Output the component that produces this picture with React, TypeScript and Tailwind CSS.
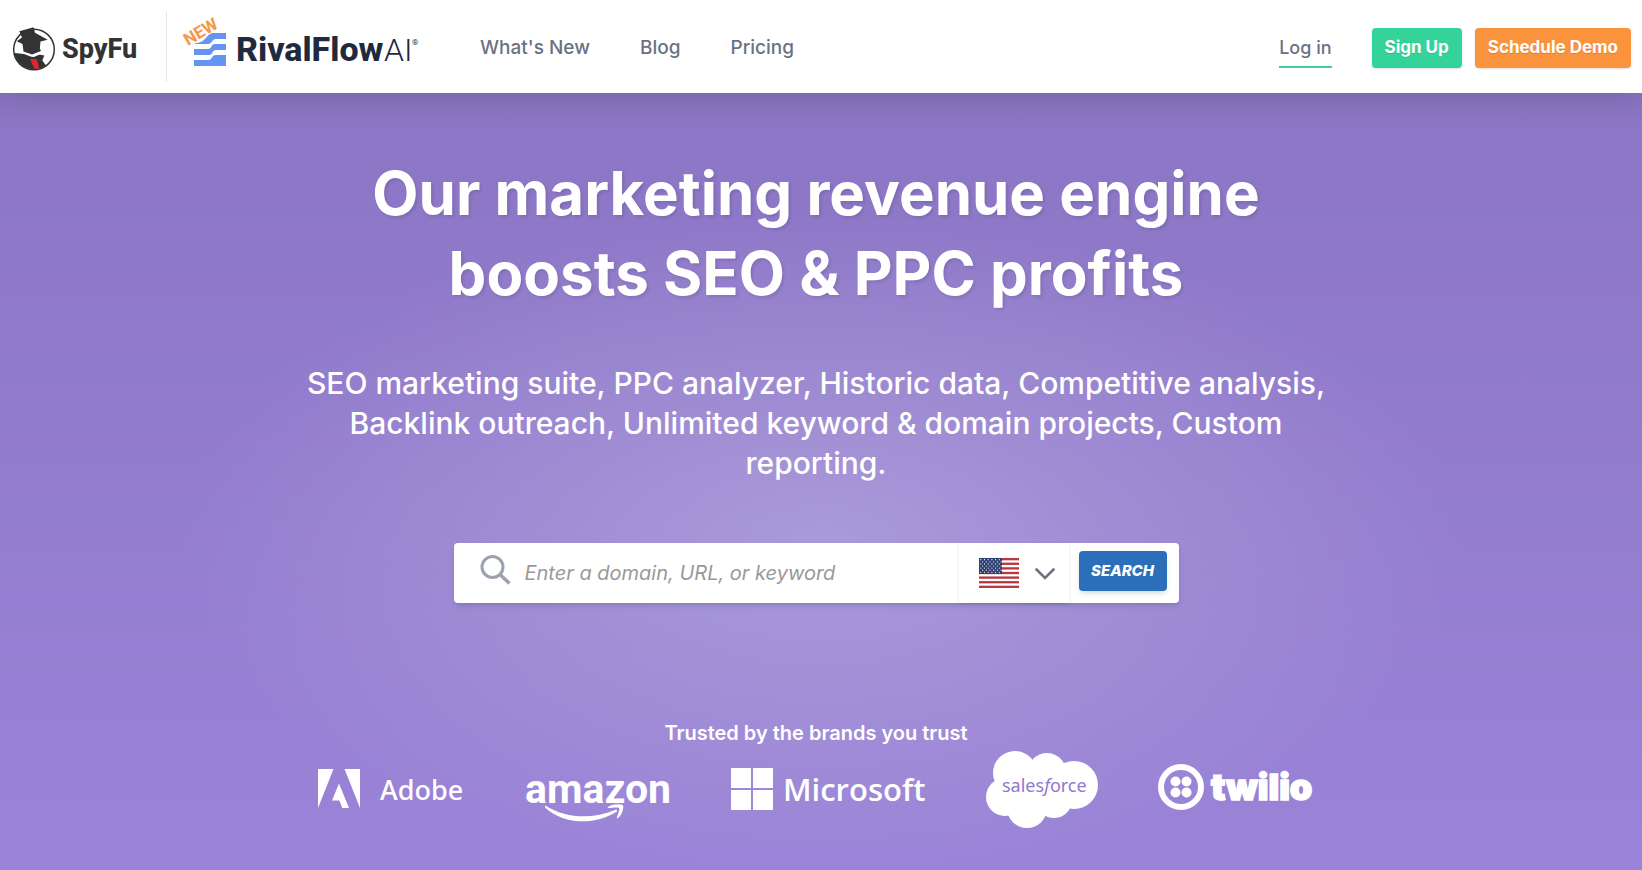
import { ReactNode } from "react";

const navLinks = ["What's New", "Blog", "Pricing"];

function SpyFuLogo() {
  return (
    <svg width="130" height="48" viewBox="0 0 130 48" role="img" aria-label="SpyFu">
      <circle cx="22" cy="24.500" r="20.300" fill="#fff" stroke="#333" strokeWidth="1.500" />
      <path
        d="M7.300 6.200 21.500 2.200 23 7.800 35.700 14.800 28.500 16.500 27.800 23.500 29 26 20 29.500 11.500 26.500 10.500 19 4.700 16.200 10 12.500Z"
        fill="#333"
      />
      <path
        d="M3 28 12 29 20 32 27 29.500 32.300 30.500 30.300 35.500 34 40.500A20.500 20.500 0 0 1 3 31Z"
        fill="#333"
      />
      <path d="M20 31.500 29 26.500 27.500 29.500 22 32Z" fill="#fff" />
      <path d="M18 33.800 24.700 34.200 27.300 43.800 22.300 43.800Z" fill="#e5222f" />
      <text x="50" y="33" fontFamily="Roboto, sans-serif" fontWeight="800" fontSize="27" fill="#333">
        SpyFu
      </text>
    </svg>
  );
}

function RivalFlowLogo() {
  return (
    <svg width="246" height="60" viewBox="-4 -4 246 60" role="img" aria-label="RivalFlow AI">
      <g fill="#6495f2">
        <path d="M13 28C23 28 23 18 31 18H43V24H33C29 24 29 29 25 29H11Z" />
        <path d="M11 34H25C29 34 28 29 32 29H43V35H33C29 35 30 40 26 40H11Z" />
        <path d="M11 45H25C30 45 28 40 33 40H43V51H11Z" />
      </g>
      <text
        x="5"
        y="31"
        transform="rotate(-31 5 31)"
        fontFamily="Roboto, sans-serif"
        fontWeight="700"
        fontSize="17"
        fill="#f5964a"
      >
        NEW
      </text>
      <text x="53" y="46" fontFamily="Roboto, sans-serif" fontWeight="800" fontSize="34" fill="#1f2a3f">
        RivalFlow
      </text>
      <text x="201" y="46" fontFamily="Roboto, sans-serif" fontWeight="300" fontSize="32" fill="#1f2a3f">
        AI
      </text>
      <text x="229" y="30" fontFamily="Roboto, sans-serif" fontSize="8" fill="#1f2a3f">
        ®
      </text>
    </svg>
  );
}

function Flag() {
  return (
    <svg width="40" height="30" viewBox="0 0 40 30" aria-hidden="true">
      <rect width="40" height="30" fill="#fff" />
      {[0, 1, 2, 3, 4, 5, 6].map((i) => (
        <rect key={i} y={(i * 60) / 13} width="40" height={30 / 13} fill="#b8383f" />
      ))}
      <rect width="23" height="16" fill="#2f3f73" />
      {[0, 1, 2, 3, 4, 5, 6].map((row) =>
        [0, 1, 2, 3, 4, 5].map((col) => (
          <circle
            key={`${row}-${col}`}
            cx={1.8 + col * 3.7 + (row % 2) * 1.8}
            cy={1.7 + row * 2.1}
            r="0.600"
            fill="#fff"
          />
        ))
      )}
    </svg>
  );
}

function AdobeLogo() {
  return (
    <svg width="147" height="42" viewBox="0 0 147 42" fill="#fff" role="img" aria-label="Adobe">
      <path d="M0 0H15.500L0 39ZM26.500 0H42V39ZM21 14.500 31 39H24.300L21.400 31.500H14Z" />
      <text x="62" y="31" fontFamily="'Noto Sans', sans-serif" fontWeight="500" fontSize="27">
        Adobe
      </text>
    </svg>
  );
}

function AmazonLogo() {
  return (
    <svg width="146" height="66" viewBox="0 -20 146 66" fill="#fff" role="img" aria-label="amazon">
      <text
        x="0"
        y="26"
        fontFamily="'Liberation Sans Narrow', Roboto, sans-serif"
        fontWeight="700"
        fontSize="41"
      >
        amazon
      </text>
      <path d="M21 29C42 42 68 42 90 33C92 32 93 34 91 35C69 49 38 47 20.500 31C19.500 29.500 20 28.500 21 29Z" />
      <path d="M83 30C88 26.500 97 27 98 28.500C99 31 97 38 93 41C92 41.500 91.500 41 92 40C93.500 36 95 32.500 94 31C92.500 30 88 30.500 84 31C83 31 82.500 30.500 83 30Z" />
    </svg>
  );
}

function MicrosoftLogo() {
  return (
    <svg width="195" height="44" viewBox="0 0 195 44" fill="#fff" role="img" aria-label="Microsoft">
      <path d="M0 0H20V20H0ZM22 0H42V20H22ZM0 22H20V42H0ZM22 22H42V42H22Z" />
      <text x="52" y="33" fontFamily="'Open Sans', sans-serif" fontWeight="600" fontSize="31">
        Microsoft
      </text>
    </svg>
  );
}

function SalesforceLogo() {
  return (
    <svg width="112" height="78" viewBox="0 0 112 78" fill="#fff" role="img" aria-label="salesforce">
      <circle cx="29" cy="22" r="22" />
      <circle cx="61" cy="21" r="19" />
      <circle cx="88" cy="34" r="24" />
      <circle cx="19" cy="46" r="19" />
      <circle cx="41" cy="57" r="20" />
      <circle cx="68" cy="49" r="18" />
      <path d="M20 20H84V56H20Z" />
      <text x="16" y="41" fontFamily="'Noto Sans', sans-serif" fontSize="18" fill="#9179d0">
        sales
        <tspan fontStyle="italic">f</tspan>
        orce
      </text>
    </svg>
  );
}

function TwilioLogo() {
  return (
    <svg width="156" height="52" viewBox="0 0 156 52" fill="#fff" role="img" aria-label="twilio">
      <circle cx="23" cy="23" r="20" fill="none" stroke="#fff" strokeWidth="6" />
      <circle cx="17.500" cy="17.500" r="5" />
      <circle cx="28.500" cy="17.500" r="5" />
      <circle cx="17.500" cy="28.500" r="5" />
      <circle cx="28.500" cy="28.500" r="5" />
      <text
        x="53"
        y="36"
        fontFamily="Inter, sans-serif"
        fontWeight="900"
        fontSize="36"
        stroke="#fff"
        strokeWidth="1.600"
      >
        twilio
      </text>
    </svg>
  );
}

function HeaderButton({ className, children }: { className: string; children: ReactNode }) {
  return (
    <button
      type="button"
      className={`h-10 whitespace-nowrap rounded px-[13px] text-[17px] font-bold text-white shadow-sm text-shadow-2xs ${className}`}
    >
      {children}
    </button>
  );
}

function Header() {
  return (
    <header className="relative flex h-[93px] items-center bg-white pl-3 pr-[11px] shadow-[0_0_30px_rgba(0,0,0,0.2)]">
      <a href="#" className="pt-1">
        <SpyFuLogo />
      </a>
      <div className="ml-6 h-[70px] w-px bg-gray-200" />
      <a href="#" className="ml-3 pb-3">
        <RivalFlowLogo />
      </a>
      <nav className="ml-[55px] flex gap-[50px] pt-1 text-[19px] font-medium text-gray-500">
        {navLinks.map((link) => (
          <a key={link} href="#" className="whitespace-nowrap">
            {link}
          </a>
        ))}
      </nav>
      <div className="ml-auto flex items-center pt-[2px]">
        <a
          href="#"
          className="mr-10 flex h-10 items-center whitespace-nowrap border-b-2 border-[#3ecf9c] pt-[2px] text-lg font-medium text-gray-500"
        >
          Log in
        </a>
        <div className="flex gap-[13px]">
          <HeaderButton className="bg-[#35d39a]">Sign Up</HeaderButton>
          <HeaderButton className="bg-[#fb923c]">Schedule Demo</HeaderButton>
        </div>
      </div>
    </header>
  );
}

function SearchBar() {
  return (
    <form
      className="flex h-[60px] w-full max-w-[725px] rounded bg-white shadow-md"
      onSubmit={(e) => e.preventDefault()}
    >
      <label htmlFor="query" className="pl-[26px] pt-3">
        <svg width="31" height="31" viewBox="0 0 31 31" fill="none" stroke="#9ca3af" aria-hidden="true">
          <circle cx="12.500" cy="12" r="10.500" strokeWidth="3" />
          <path d="M20 19.500 29.500 28.500" strokeWidth="3.500" />
        </svg>
      </label>
      <input
        id="query"
        type="text"
        aria-label="Enter a domain, URL, or keyword"
        placeholder="Enter a domain, URL, or keyword"
        className="min-w-0 flex-1 pl-[14px] text-xl italic outline-none placeholder:text-[#999]"
      />
      <div className="relative flex w-[110px] items-center justify-between bg-white pl-5 pr-[14px] shadow">
        <Flag />
        <svg width="20" height="14" viewBox="0 -2 20 14" fill="none" stroke="#6b7280" strokeWidth="2.600" strokeLinecap="round" aria-hidden="true">
          <path d="M1.500 1.500 10 10 18.500 1.500" />
        </svg>
        <select aria-label="Country" className="absolute inset-0 cursor-pointer opacity-0">
          <option>US</option>
        </select>
      </div>
      <button
        type="submit"
        className="ml-[10px] mr-3 mt-2 h-10 w-[88px] rounded bg-[#2b6fba] text-[15px] font-extrabold italic text-white shadow-md"
      >
        SEARCH
      </button>
    </form>
  );
}

export default function App() {
  return (
    <div className="flex min-h-screen flex-col bg-[#9b84d6] font-['Inter',sans-serif]">
      <Header />
      <main className="flex flex-1 flex-col items-center bg-[radial-gradient(ellipse_640px_330px_at_50%_450px,rgba(176,164,220,0.75),rgba(160,140,214,0)),linear-gradient(#8b75c4,#9b84d8)] pb-10 pl-6 pr-[34px] pt-[60px] text-center text-white">
        <h1 className="max-w-[960px] text-6xl/[80px] font-bold text-shadow-[2px_2px_3px_rgba(0,0,0,0.1)]">
          Our marketing revenue engine boosts SEO &amp; PPC profits
        </h1>
        <p className="mt-[50px] max-w-[1024px] text-[30px]/[40px] font-medium">
          SEO marketing suite, PPC analyzer, Historic data, Competitive analysis, Backlink outreach,
          Unlimited keyword &amp; domain projects, Custom reporting.
        </p>
        <div className="mt-[60px] flex w-full justify-center">
          <SearchBar />
        </div>
        <h2 className="mt-[116px] text-xl/7 font-semibold">Trusted by the brands you trust</h2>
        <div className="mt-1 flex flex-wrap items-center justify-center gap-[60px]">
          <AdobeLogo />
          <AmazonLogo />
          <MicrosoftLogo />
          <SalesforceLogo />
          <TwilioLogo />
        </div>
      </main>
    </div>
  );
}
